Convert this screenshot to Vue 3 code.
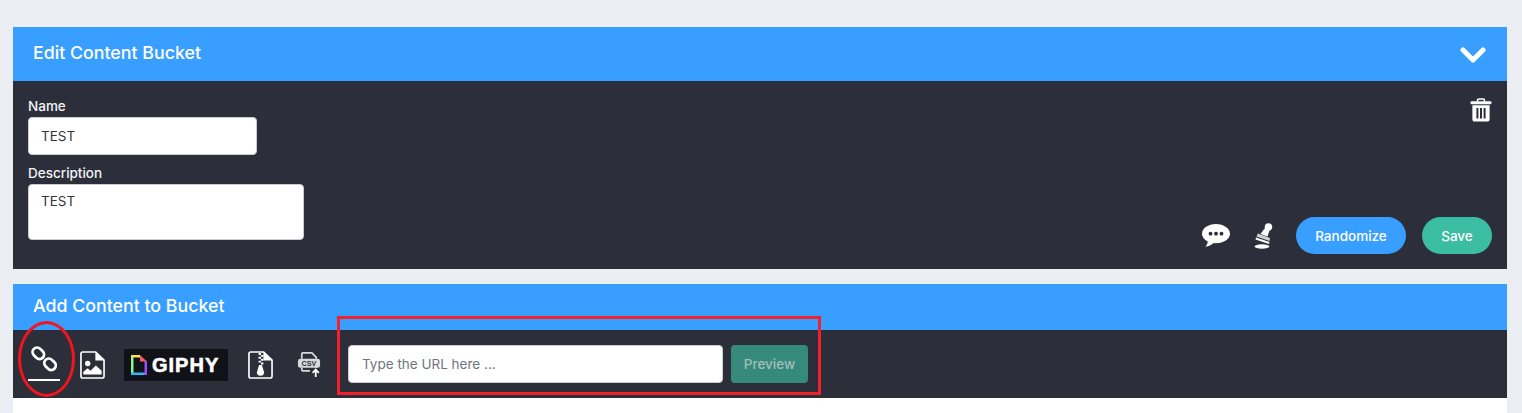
<script setup>
import { ref } from 'vue';

const bucketName = ref('TEST');
const description = ref('TEST');
const url = ref('');
</script>

<template>
  <div class="page">
    <section class="panel edit-panel">
      <header class="panel-head tall">
        <h2>Edit Content Bucket</h2>
        <svg class="chevron" viewBox="0 0 26 18" width="26" height="18">
          <path d="M3 4l10 10L23 4" fill="none" stroke="#fff" stroke-width="5" stroke-linecap="round" stroke-linejoin="round" />
        </svg>
      </header>
      <div class="edit-body">
        <div class="fields">
          <label class="field-label">Name</label>
          <input class="name-input" type="text" v-model="bucketName" />
          <label class="field-label desc-label">Description</label>
          <textarea class="desc-input" v-model="description"></textarea>
        </div>
        <div class="side">
          <svg class="trash" viewBox="0 0 22 24" width="22" height="24">
            <path d="M7.500 3.500V2.400C7.500 1.600 8.100 1 8.900 1h4.200c.8 0 1.400.6 1.400 1.400v1.100" fill="none" stroke="#fff" stroke-width="1.600" />
            <rect x="0.500" y="3.200" width="21" height="3" rx="1.200" fill="#fff" />
            <path fill="#fff" fill-rule="evenodd" d="M2.400 7.200h17.200v14.200c0 1.200-1 2.100-2.100 2.100h-13c-1.200 0-2.100-1-2.100-2.100zM6.400 10v10.400h2V10zM10 10v10.400h2V10zM13.600 10v10.400h2V10z" />
          </svg>
          <div class="actions">
            <svg class="chat" viewBox="0 0 30 25" width="30" height="25">
              <path fill="#fff" d="M15 1C7.300 1 1 5.300 1 10.700c0 3.300 2.300 6.100 5.800 7.900-.2 1.900-1 3.700-2.500 5.200 3.300-.3 6.300-1.900 8.400-3.800.9.1 1.800.2 2.300.2 7.700 0 14-4.300 14-9.500S22.700 1 15 1z" />
              <circle cx="9.500" cy="10.700" r="1.900" fill="#2c2f3a" />
              <circle cx="15" cy="10.700" r="1.900" fill="#2c2f3a" />
              <circle cx="20.500" cy="10.700" r="1.900" fill="#2c2f3a" />
            </svg>
            <svg class="stamp" viewBox="0 0 20 26" width="20" height="26">
              <circle cx="14.500" cy="4" r="3.800" fill="#fff" />
              <path d="M10.500 5.500l5 2-2 6-7-2.500z" fill="#fff" />
              <path d="M4 10.500l12 4.500-.5 3-13-4.500z" fill="#cfd0d3" />
              <path d="M2 14.500l13.500 4.500-.5 2-13.500-4.500z" fill="#fff" />
              <ellipse cx="8" cy="23.500" rx="7.500" ry="2.200" fill="#fff" />
            </svg>
            <button class="pill blue">Randomize</button>
            <button class="pill green">Save</button>
          </div>
        </div>
      </div>
    </section>

    <section class="panel add-panel">
      <header class="panel-head">
        <h2>Add Content to Bucket</h2>
      </header>
      <div class="toolbar">
        <div class="tab active">
          <svg viewBox="0 0 26 26" width="26" height="26">
            <g fill="none" stroke="#fff" stroke-width="2.800">
              <rect x="1.050" y="2.800" width="12.500" height="9" rx="4.500" transform="rotate(45 7.300 7.300)" />
              <rect x="12.750" y="13.800" width="12.500" height="9" rx="4.500" transform="rotate(45 19 18.300)" />
            </g>
          </svg>
        </div>
        <svg class="file-icon" viewBox="0 0 26 29" width="25" height="28">
          <path d="M2.800 1h13.500L25 9.500v16.700c0 1-.8 1.800-1.800 1.800H2.800c-1 0-1.800-.8-1.800-1.800V2.800C1 1.800 1.800 1 2.800 1z" fill="none" stroke="#fff" stroke-width="1.700" />
          <path d="M16 1v8.800h9z" fill="#fff" />
          <circle cx="8" cy="13" r="2.800" fill="#fff" />
          <path d="M3.500 24.500v-3l4.500-3.500 3 2.500 5.500-5.500 6 5.500v4z" fill="#fff" />
        </svg>
        <div class="giphy">
          <svg viewBox="0 0 16 20" width="16" height="20">
            <rect x="0" y="0" width="2.500" height="20" fill="#8ef58e" />
            <rect x="0" y="0" width="9" height="2.500" fill="#f5e14f" />
            <rect x="0" y="17.500" width="16" height="2.500" fill="#34b3f5" />
            <rect x="13.500" y="6" width="2.500" height="14" fill="#9a4dff" />
            <path d="M9 0l7 6.500H9z" fill="#f25f63" />
          </svg>
          <span class="giphy-word">GIPHY</span>
        </div>
        <svg class="file-icon zip" viewBox="0 0 26 29" width="25" height="28">
          <path d="M2.800 1h13.500L25 9.500v16.700c0 1-.8 1.800-1.800 1.800H2.800c-1 0-1.800-.8-1.800-1.800V2.800C1 1.800 1.800 1 2.800 1z" fill="none" stroke="#fff" stroke-width="1.700" />
          <path d="M16 1v8.800h9z" fill="#fff" />
          <path d="M11 2h2.500v2H11zM13.500 4H16v2h-2.500zM11 6h2.500v2H11zM13.500 8H16v2h-2.500zM11 10h2.500v2H11zM13.500 12H16v2h-2.500z" fill="#fff" />
          <path d="M11.500 14.500h3l2.200 7.500a3.700 3.700 0 1 1-7.400 0z" fill="#fff" />
        </svg>
        <svg class="csv-icon" viewBox="0 0 24 26" width="24" height="25">
          <path d="M4.500 7V2.200C4.500 1.500 5 1 5.700 1H15l4.500 4.500V7M4.500 16.500v2c0 .7.500 1.200 1.200 1.200H13M19.500 16.500v-1" fill="none" stroke="#d8d9db" stroke-width="1.800" />
          <rect x="0.500" y="7" width="23" height="9.500" rx="2.500" fill="#d8d9db" />
          <text x="12" y="14.700" class="csv-text">CSV</text>
          <path d="M19 26v-6.500M15.800 21.800l3.200-3.400 3.200 3.400" fill="none" stroke="#fff" stroke-width="1.900" />
        </svg>
        <div class="url-row">
          <input class="url-input" type="text" v-model="url" placeholder="Type the URL here ..." />
          <button class="preview">Preview</button>
        </div>
      </div>
    </section>
    <div class="under"></div>

    <!-- red annotations drawn over the screenshot -->
    <div class="mark-ellipse"></div>
    <div class="mark-rect"></div>
  </div>
</template>

<style>
html,
body {
  margin: 0;
  background: #ebeef3;
}
</style>

<style scoped>
.page {
  position: relative;
  height: 413px;
  padding: 27px 15px 0 13px;
  box-sizing: border-box;
  overflow: hidden;
  background: #ebeef3;
  font-family: Inter, "Liberation Sans", sans-serif;
}

.panel-head {
  display: flex;
  align-items: center;
  justify-content: space-between;
  height: 46px;
  padding: 0 21px 0 20px;
  background: #389eff;
  color: #fff;
}

.panel-head.tall {
  height: 54px;
}

.panel-head h2 {
  margin: 0 0 4px;
  font-size: 17.800px;
  font-weight: 500;
  color: #fff;
}

.chevron {
  margin-top: 2px;
}

.edit-body {
  display: flex;
  justify-content: space-between;
  height: 188px;
  padding: 17px 15px 15px;
  box-sizing: border-box;
  background: #2c2f3a;
}

.fields {
  display: flex;
  flex-direction: column;
  align-items: flex-start;
}

.field-label {
  height: 19px;
  font-size: 13.500px;
  font-weight: 500;
  line-height: 17px;
  color: #f2f3f5;
}

.desc-label {
  margin-top: 10px;
}

.name-input,
.desc-input,
.url-input {
  display: block;
  box-sizing: border-box;
  border: 1px solid #c9ccd3;
  border-radius: 4px;
  background: #fff;
  font-family: inherit;
  font-size: 13.500px;
  color: #33363d;
  outline: none;
}

.name-input {
  width: 229px;
  height: 38px;
  padding: 0 12px;
}

.desc-input {
  width: 276px;
  height: 56px;
  padding: 8px 12px;
  resize: none;
  line-height: 16px;
}

.side {
  display: flex;
  flex-direction: column;
  align-items: flex-end;
  justify-content: space-between;
}

.actions {
  display: flex;
  align-items: center;
}

.chat {
  margin-right: 23px;
}

.stamp {
  margin-right: 22px;
}

.pill {
  height: 37px;
  border: none;
  border-radius: 19px;
  font-family: inherit;
  font-size: 13.500px;
  font-weight: 500;
  color: #fff;
}

.pill.blue {
  width: 110px;
  margin-right: 16px;
  background: #389eff;
}

.pill.green {
  width: 70px;
  background: #3abda2;
}

.add-panel {
  margin-top: 15px;
}

.toolbar {
  display: flex;
  align-items: center;
  height: 68px;
  padding-left: 15px;
  background: #2c2f3a;
}

.tab {
  display: flex;
  justify-content: center;
  align-self: flex-start;
  box-sizing: border-box;
  width: 32px;
  height: 39px;
  margin-top: 12px;
  padding-top: 4px;
  border-bottom: 2px solid #fff;
}

.file-icon {
  margin-left: 20px;
  margin-top: 1px;
}

.giphy {
  display: flex;
  align-items: center;
  gap: 5px;
  width: 104px;
  height: 32px;
  margin-left: 19px;
  margin-top: 2px;
  padding-left: 7px;
  box-sizing: border-box;
  background: #111118;
}

.giphy-word {
  font-family: "Liberation Sans", sans-serif;
  font-size: 20px;
  font-weight: 700;
  letter-spacing: 1px;
  color: #fff;
  -webkit-text-stroke: 0.6px #fff;
}

.file-icon.zip {
  margin-left: 20px;
}

.csv-icon {
  margin-left: 24px;
}

.csv-text {
  font-family: "Liberation Sans", sans-serif;
  font-size: 7.500px;
  font-weight: 700;
  text-anchor: middle;
  fill: #2c2f3a;
}

.url-row {
  display: flex;
  align-items: center;
  gap: 8px;
  margin-left: 27px;
}

.url-input {
  width: 375px;
  height: 38px;
  padding: 0 13px;
}

.url-input::placeholder {
  color: #6f757d;
  opacity: 1;
}

.preview {
  width: 77px;
  height: 38px;
  padding: 0;
  border: none;
  border-radius: 4px;
  background: #358a7c;
  font-family: inherit;
  font-size: 13.500px;
  font-weight: 500;
  color: #a3bdb9;
}

.under {
  height: 15px;
  background: #fff;
}

.mark-ellipse {
  position: absolute;
  left: 18px;
  top: 321px;
  width: 57px;
  height: 76px;
  box-sizing: border-box;
  border: 3px solid #f2151d;
  border-radius: 50%;
}

.mark-rect {
  position: absolute;
  left: 337px;
  top: 316px;
  width: 484px;
  height: 79px;
  box-sizing: border-box;
  border: 3px solid #f2202b;
}
</style>
